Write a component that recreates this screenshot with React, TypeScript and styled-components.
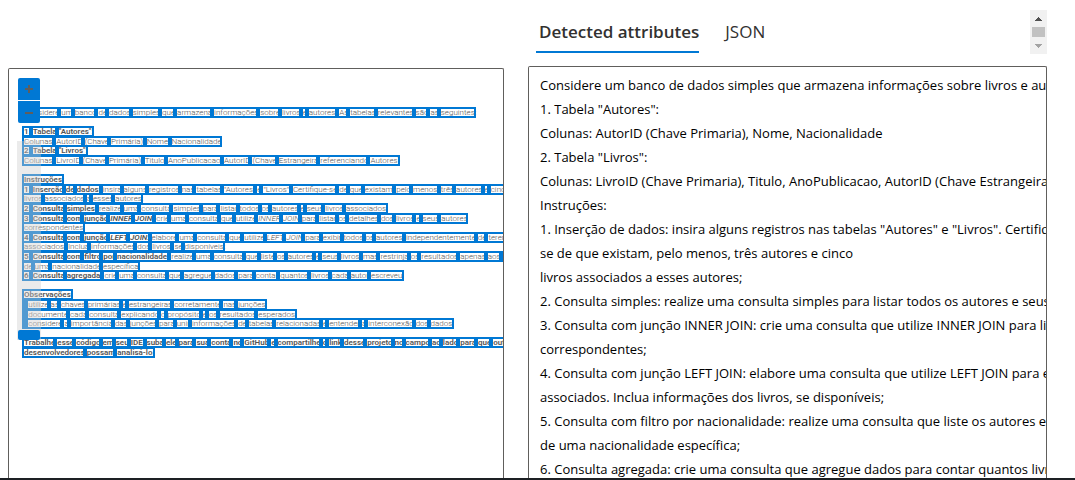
import React from 'react';
import styled, { createGlobalStyle } from 'styled-components';

const GlobalStyle = createGlobalStyle`
  * { box-sizing: border-box; }
  html, body { margin: 0; background: #fff; }
  body { font-family: 'Segoe UI', 'Open Sans', 'Noto Sans', sans-serif; color: #000; }
`;

const Page = styled.main`
  height: 100vh;
  padding: 0 28px 0 8px;
  display: grid;
  grid-template-columns: minmax(0, 496fr) minmax(0, 519fr);
  gap: 24px;
  overflow: hidden;
  border-bottom: 2px solid #1d2024;
`;

const Column = styled.section<{ $top: number }>`
  display: flex;
  flex-direction: column;
  min-height: 0;
  padding-top: ${(p) => p.$top}px;
`;

const Panel = styled.div`
  position: relative;
  flex: 1;
  min-height: 0;
  overflow: hidden;
  border: 1px solid #605e5c;
  border-bottom: 0;
  border-radius: 2px 2px 0 0;
`;

const Scan = styled.div`
  display: grid;
  grid-auto-rows: 10px 9px 10px 9px 10px;
  padding: 39px 0 0 15px;
  font: 8px/10px Roboto, sans-serif;
  color: #555;
  white-space: nowrap;
`;

const ScanLine = styled.div`
  height: 10px;
`;

const Word = styled.span<{ $bold?: boolean; $italic?: boolean }>`
  position: relative;
  font-weight: ${(p) => (p.$bold ? 600 : 300)};
  font-style: ${(p) => (p.$italic ? 'italic' : 'normal')};

  &::after {
    content: '';
    position: absolute;
    inset: -1px 0 -1px -2px;
    border: 2px solid #0078d4;
  }
`;

const ZoomTools = styled.div`
  position: absolute;
  top: 9px;
  left: 9px;
  display: grid;
  gap: 1px;
  background: #fff;
`;

const ZoomButton = styled.button<{ $end?: boolean }>`
  width: 22px;
  height: 22px;
  padding: 0;
  border: 0;
  border-radius: ${(p) => (p.$end ? '0 0 2px 2px' : '2px 2px 0 0')};
  background: #0078d4;
  color: #605e5c;
  display: grid;
  place-items: center;
`;

const ZoomTrack = styled.div`
  position: absolute;
  top: 72px;
  left: 8px;
  width: 24px;
  height: 199px;
  padding: 0 1px;
  display: flex;
  align-items: flex-end;
  background: rgba(205, 205, 205, 0.4);
`;

const ZoomThumb = styled.div`
  width: 22px;
  height: 10px;
  border-radius: 2px;
  background: #0078d4;
`;

const Header = styled.header`
  display: flex;
  justify-content: space-between;
  height: 44px;
  margin-bottom: 12px;
`;

const Tabs = styled.div`
  display: flex;
  gap: 23px;
  padding-left: 8px;
`;

const Tab = styled.button<{ $active?: boolean }>`
  height: 43px;
  padding: 2px 0 0 3px;
  border: 0;
  border-bottom: 2px solid ${(p) => (p.$active ? '#0078d4' : 'transparent')};
  background: none;
  color: #323130;
  font: ${(p) => (p.$active ? 600 : 400)} 17px/24px 'Segoe UI', 'Open Sans', sans-serif;
`;

const Scroller = styled.div`
  width: 17px;
  height: 44px;
  padding: 0 2px;
  display: grid;
  grid-template-rows: 17px 10px 17px;
  background: #f1f1f1;
`;

const ScrollButton = styled.button`
  padding: 0;
  border: 0;
  background: none;
  display: grid;
  place-items: center;
`;

const ScrollThumb = styled.div`
  background: #c1c1c1;
`;

const Result = styled.div`
  padding: 6px 0 0 11px;
  font: 13px/24px 'Segoe UI', 'Open Sans', sans-serif;
  white-space: nowrap;
`;

const ResultLine = styled.div``;

/* *bold, _italic and +bold italic words; the rest is plain */
const scan = [
  'Considere um banco de dados simples que armazena informações sobre livros e autores. As tabelas relevantes são as seguintes:',
  '',
  '*1. *Tabela *"Autores":',
  'Colunas: AutorID (Chave Primária), Nome, Nacionalidade',
  '*2. *Tabela *"Livros":',
  'Colunas: LivroID (Chave Primária), Titulo, AnoPublicacao, AutorID (Chave Estrangeira referenciando Autores)',
  '',
  '*Instruções:',
  '*1. *Inserção *de *dados: insira alguns registros nas tabelas "Autores" e "Livros". Certifique-se de que existam, pelo menos, três autores e cinco',
  'livros associados a esses autores;',
  '*2. *Consulta *simples: realize uma consulta simples para listar todos os autores e seus livros associados;',
  '*3. *Consulta *com *junção +INNER +JOIN: crie uma consulta que utilize _INNER _JOIN para listar os detalhes dos livros e seus autores',
  'correspondentes;',
  '*4. *Consulta *com *junção +LEFT +JOIN: elabore uma consulta que utilize _LEFT _JOIN para exibir todos os autores, independentemente de terem',
  'associados. Inclua informações dos livros, se disponíveis;',
  '*5. *Consulta *com *filtro *por *nacionalidade: realize uma consulta que liste os autores e seus livros, mas restrinja os resultados apenas aos autores',
  'de uma nacionalidade específica;',
  '*6. *Consulta *agregada: crie uma consulta que agregue dados para contar quantos livros cada autor escreveu.',
  '',
  '*Observações:',
  '- utilize as chaves primárias e estrangeiras corretamente nas junções;',
  '- documente cada consulta explicando o propósito e os resultados esperados;',
  '- considere a importância das junções para unir informações de tabelas relacionadas e entender a interconexão dos dados.',
  '',
  '*Trabalhe *esse *código *em *seu *IDE, *suba *ele *para *sua *conta *no *GitHub *e *compartilhe *o *link *desse *projeto *no *campo *ao *lado *para *que *outros',
  '*desenvolvedores *possam *analisá-lo.',
];

const result = [
  'Considere um banco de dados simples que armazena informações sobre livros e autores.',
  '1. Tabela "Autores":',
  'Colunas: AutorID (Chave Primaria), Nome, Nacionalidade',
  '2. Tabela "Livros":',
  'Colunas: LivroID (Chave Primaria), Titulo, AnoPublicacao, AutorID (Chave Estrangeira referenciando',
  'Instruções:',
  '1. Inserção de dados: insira alguns registros nas tabelas "Autores" e "Livros". Certifique-',
  'se de que existam, pelo menos, três autores e cinco',
  'livros associados a esses autores;',
  '2. Consulta simples: realize uma consulta simples para listar todos os autores e seus livros',
  '3. Consulta com junção INNER JOIN: crie uma consulta que utilize INNER JOIN para listar',
  'correspondentes;',
  '4. Consulta com junção LEFT JOIN: elabore uma consulta que utilize LEFT JOIN para exibir',
  'associados. Inclua informações dos livros, se disponíveis;',
  '5. Consulta com filtro por nacionalidade: realize uma consulta que liste os autores e seus',
  'de uma nacionalidade específica;',
  '6. Consulta agregada: crie uma consulta que agregue dados para contar quantos livros',
];

function renderWord(raw: string, i: number) {
  const mark = '*_+'.includes(raw[0]) ? raw[0] : '';
  return (
    <React.Fragment key={i}>
      {i > 0 && ' '}
      <Word $bold={mark === '*' || mark === '+'} $italic={mark === '_' || mark === '+'}>
        {mark ? raw.slice(1) : raw}
      </Word>
    </React.Fragment>
  );
}

export default function App() {
  return (
    <>
      <GlobalStyle />
      <Page>
        <Column $top={68}>
          <Panel>
            <Scan>
              {scan.map((line, i) => (
                <ScanLine key={i}>{line && line.split(' ').map(renderWord)}</ScanLine>
              ))}
            </Scan>
            <ZoomTrack><ZoomThumb /></ZoomTrack>
            <ZoomTools>
              <ZoomButton aria-label="Zoom in">
                <svg width="8" height="8" viewBox="0 0 8 8"><path d="M4 0v8M0 4h8" stroke="currentColor" strokeWidth="2" /></svg>
              </ZoomButton>
              <ZoomButton $end aria-label="Zoom out">
                <svg width="8" height="8" viewBox="0 0 8 8"><path d="M0 5h8" stroke="currentColor" strokeWidth="2" /></svg>
              </ZoomButton>
            </ZoomTools>
          </Panel>
        </Column>
        <Column $top={10}>
          <Header>
            <Tabs role="tablist">
              <Tab $active role="tab" aria-selected="true">Detected attributes</Tab>
              <Tab role="tab" aria-selected="false">JSON</Tab>
            </Tabs>
            <Scroller>
              <ScrollButton aria-label="Scroll up">
                <svg width="7" height="4" viewBox="0 0 7 4"><path d="M3 0h1v1h1v1h1v1h1v1H0V3h1V2h1V1h1z" fill="#505050" /></svg>
              </ScrollButton>
              <ScrollThumb />
              <ScrollButton aria-label="Scroll down">
                <svg width="7" height="4" viewBox="0 0 7 4"><path d="M0 0h7v1H6v1H5v1H4v1H3V3H2V2H1V1H0z" fill="#a3a3a3" /></svg>
              </ScrollButton>
            </Scroller>
          </Header>
          <Panel>
            <Result>
              {result.map((line) => (
                <ResultLine key={line}>{line}</ResultLine>
              ))}
            </Result>
          </Panel>
        </Column>
      </Page>
    </>
  );
}
